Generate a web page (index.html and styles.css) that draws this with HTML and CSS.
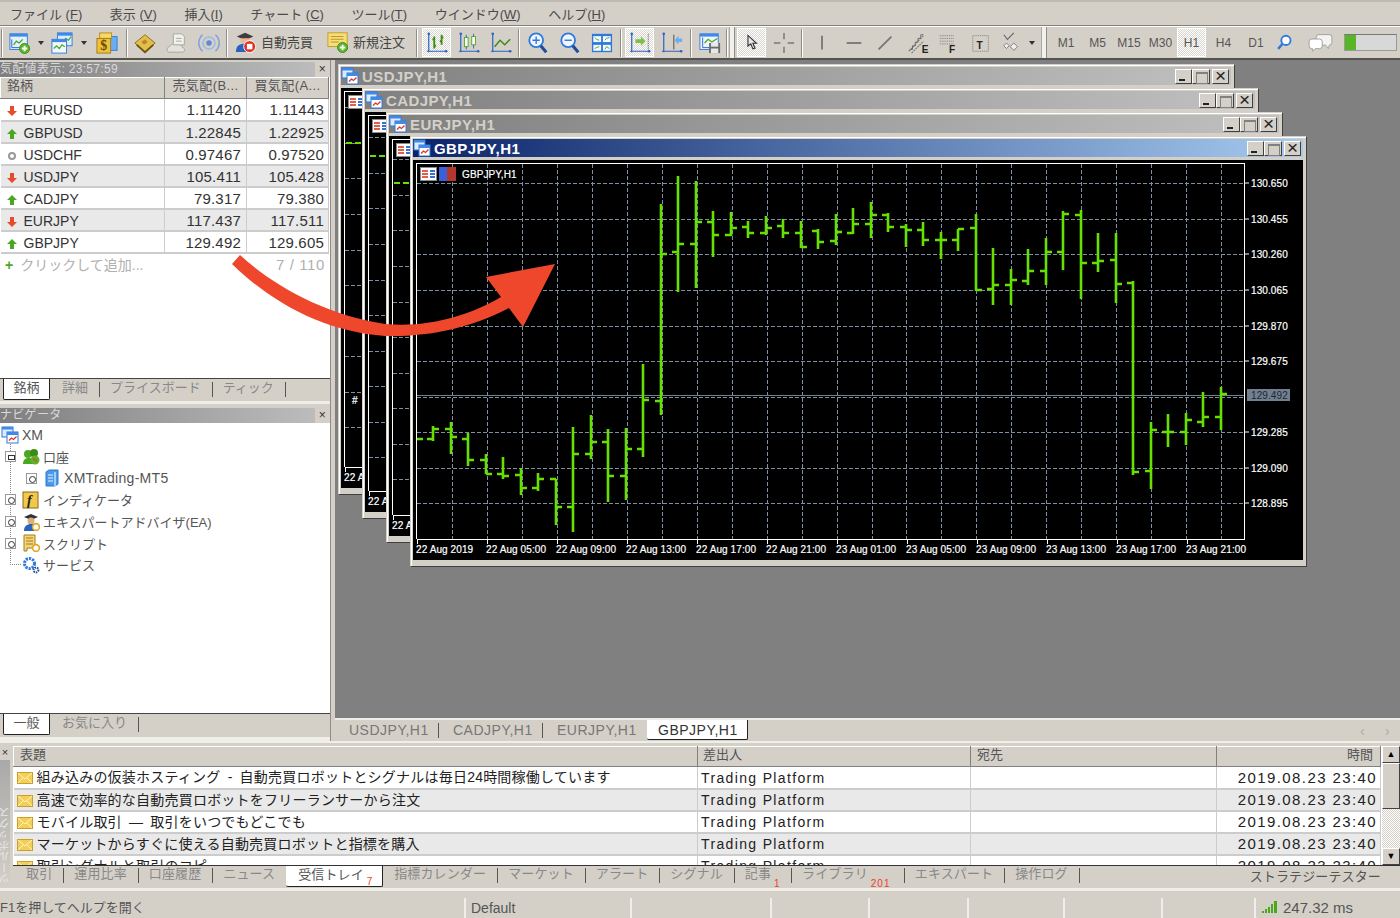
FILE: index.html
```html
<!DOCTYPE html>
<html lang="ja">
<head>
    <meta charset="UTF-8">
    <title>MetaTrader 5</title>
    <link rel="stylesheet" href="styles.css">
</head>
<body>

    <!-- Icon sprite -->
    <svg class="sprite" xmlns="http://www.w3.org/2000/svg">
        <symbol id="i-win" viewBox="0 0 18 18">
            <rect x="1" y="1" width="11" height="10" fill="#dcebff" stroke="#2f78dc"/>
            <rect x="1" y="1" width="11" height="2.5" fill="#3d8ae8"/>
            <rect x="6" y="6" width="11" height="11" fill="#fff" stroke="#2f78dc"/>
            <rect x="6" y="6" width="11" height="3" fill="#3d8ae8"/>
            <path d="M8 14.5l2.5-2.5 2 1.5 3-3" fill="none" stroke="#e0301e" stroke-width="1.2"/>
        </symbol>
        <symbol id="i-new" viewBox="0 0 24 24">
            <rect x="1" y="2" width="19" height="17" fill="#e4f0ff" stroke="#2f78dc"/>
            <rect x="1" y="2" width="19" height="3" fill="#3d8ae8"/>
            <path d="M3 8v9h15" fill="none" stroke="#2a62c0"/>
            <path d="M5 14l3-4 3 2 4-4" fill="none" stroke="#4aa81e" stroke-width="1.4"/>
            <circle cx="17" cy="18" r="5.5" fill="#5cb52a" stroke="#3d8a18"/>
            <path d="M14 18h6M17 15v6" stroke="#fff" stroke-width="2"/>
        </symbol>
        <symbol id="i-profiles" viewBox="0 0 24 24">
            <rect x="7" y="1" width="16" height="14" fill="#dcebff" stroke="#2f78dc"/>
            <rect x="7" y="1" width="16" height="3" fill="#3d8ae8"/>
            <path d="M13 10l3-3 3 2 3-4" fill="none" stroke="#4aa81e" stroke-width="1.3"/>
            <rect x="1" y="8" width="16" height="15" fill="#f0f7ff" stroke="#2f78dc"/>
            <rect x="1" y="8" width="16" height="3" fill="#3d8ae8"/>
            <path d="M3 18l3-3 3 3 3-4 3 2" fill="none" stroke="#4aa81e" stroke-width="1.3"/>
        </symbol>
        <symbol id="i-dollar" viewBox="0 0 24 24">
            <rect x="10" y="5" width="13" height="15" fill="#6aaef0" stroke="#2f78dc"/>
            <rect x="4" y="1" width="13" height="6" fill="#f4d96a" stroke="#b58a1a"/>
            <rect x="1" y="7" width="15" height="16" fill="#eec040" stroke="#a67c10"/>
            <text class="svg-dollar" x="8.5" y="20">$</text>
        </symbol>
        <symbol id="i-book" viewBox="0 0 24 24">
            <path d="M1 12L12 3l11 9-11 10z" fill="#e3bd4d" stroke="#8a6a10"/>
            <path d="M3 14l9 8 9-8" fill="none" stroke="#6b5410" stroke-width="2"/>
            <path d="M8 11l4-3 3 3-4 3z" fill="#b88a20"/>
        </symbol>
        <symbol id="i-cloud" viewBox="0 0 24 24">
            <path d="M3 22c-3-1-2-6 1-6 1-3 5-4 8-2 3-1 6 0 6 3 3 0 3 5 0 5z" fill="#e4e2dc" stroke="#a5a39c"/>
            <path d="M8 2h9l3 3v9H8z" fill="#f2f1ec" stroke="#a5a39c"/>
            <path d="M11 7h6M11 10h6" stroke="#a5a39c"/>
        </symbol>
        <symbol id="i-signal" viewBox="0 0 24 24">
            <circle cx="12" cy="12" r="3" fill="#5a8ad8"/>
            <circle cx="12" cy="12" r="6.5" fill="none" stroke="#9bb8e6" stroke-width="1.6"/>
            <path d="M5 3a12 12 0 0 0 0 18M19 3a12 12 0 0 1 0 18" fill="none" stroke="#7ea2de" stroke-width="1.6"/>
        </symbol>
        <symbol id="i-auto" viewBox="0 0 24 24">
            <path d="M2 6l9-4 9 4-9 4z" fill="#3e3e3e"/>
            <path d="M6 8v4c3 2 7 2 10 0V8z" fill="#e8b890"/>
            <path d="M1 23c0-7 4-9 9-9s7 3 7 9z" fill="#2a62c0"/>
            <circle cx="16" cy="17" r="6.5" fill="#e23020" stroke="#fff"/>
            <rect x="13" y="14" width="6" height="6" fill="#fff"/>
        </symbol>
        <symbol id="i-order" viewBox="0 0 24 24">
            <rect x="1" y="2" width="21" height="15" fill="#f6de78" stroke="#c09a1c"/>
            <path d="M4 6h14M4 9h14M4 12h9" stroke="#b89020"/>
            <circle cx="17" cy="18" r="5.5" fill="#5cb52a" stroke="#3d8a18"/>
            <path d="M14 18h6M17 15v6" stroke="#fff" stroke-width="2"/>
        </symbol>
        <symbol id="i-axes" viewBox="0 0 24 24">
            <path d="M3 1v21M1 21h22" fill="none" stroke="#2a62c0" stroke-width="1.3"/>
            <circle cx="3" cy="2" r="1.4" fill="#2a62c0"/>
            <circle cx="22" cy="21" r="1.4" fill="#2a62c0"/>
        </symbol>
        <symbol id="i-bars" viewBox="0 0 24 24">
            <use href="#i-axes"/>
            <path d="M9 5v13M7 8h2M9 15h2M17 3v11M15 10h2M17 6h2" fill="none" stroke="#3c8c14" stroke-width="2"/>
        </symbol>
        <symbol id="i-candles" viewBox="0 0 24 24">
            <use href="#i-axes"/>
            <rect x="7" y="6" width="4" height="10" fill="#fff" stroke="#4aa81e"/>
            <rect x="15" y="5" width="4" height="9" fill="#fff" stroke="#4aa81e"/>
            <path d="M9 3v3M9 16v3M17 2v3M17 14v4" stroke="#2a62c0"/>
        </symbol>
        <symbol id="i-line" viewBox="0 0 24 24">
            <use href="#i-axes"/>
            <path d="M5 16l6-7 5 5 6-6" fill="none" stroke="#3c8c14" stroke-width="1.6"/>
        </symbol>
        <symbol id="i-zoomin" viewBox="0 0 24 24">
            <circle cx="10" cy="9" r="7.5" fill="#f0f6ff" stroke="#2f78dc" stroke-width="2"/>
            <path d="M6 9h8M10 5v8" stroke="#2f78dc" stroke-width="1.5"/>
            <path d="M15 15l6 7" stroke="#1d4f98" stroke-width="3.4"/>
        </symbol>
        <symbol id="i-zoomout" viewBox="0 0 24 24">
            <circle cx="10" cy="9" r="7.5" fill="#f0f6ff" stroke="#2f78dc" stroke-width="2"/>
            <path d="M6 9h8" stroke="#2f78dc" stroke-width="1.5"/>
            <path d="M15 15l6 7" stroke="#1d4f98" stroke-width="3.4"/>
        </symbol>
        <symbol id="i-tile" viewBox="0 0 24 24">
            <rect x="1" y="2" width="22" height="20" fill="#2f78dc"/>
            <rect x="2.5" y="4.5" width="8.5" height="6.5" fill="#f4f8ff"/>
            <rect x="13" y="4.5" width="8.5" height="6.5" fill="#f4f8ff"/>
            <rect x="2.5" y="14" width="8.5" height="6.5" fill="#f4f8ff"/>
            <rect x="13" y="14" width="8.5" height="6.5" fill="#f4f8ff"/>
            <path d="M4 6l2 2 3 1M15 9l2-2 3-1M4 18l2-1 3-1M15 19l2-3 3 2" fill="none" stroke="#4aa81e"/>
        </symbol>
        <symbol id="i-shift" viewBox="0 0 24 24">
            <use href="#i-axes"/>
            <path d="M21 2v18" stroke="#444" stroke-dasharray="1 1"/>
            <path d="M7 8h6V5l5 5-5 5v-3H7z" fill="#7cc04a"/>
        </symbol>
        <symbol id="i-autoscroll" viewBox="0 0 24 24">
            <use href="#i-axes"/>
            <path d="M14 3v16" stroke="#444"/>
            <path d="M23 7h-4V4l-4 5 4 5v-3h4z" fill="#6aaef0"/>
        </symbol>
        <symbol id="i-template" viewBox="0 0 24 24">
            <rect x="1" y="2" width="20" height="17" fill="#eef5ff" stroke="#2f78dc"/>
            <rect x="1" y="2" width="20" height="3" fill="#3d8ae8"/>
            <path d="M4 6v11h8" fill="none" stroke="#2a62c0"/>
            <path d="M6 12l4-4 4 3 6-4" fill="none" stroke="#4aa81e" stroke-width="1.4"/>
            <rect x="11" y="12" width="12" height="11" fill="#6c6c6c"/>
            <rect x="13" y="12" width="8" height="4" fill="#e8e8e8"/>
            <rect x="13" y="18" width="8" height="5" fill="#e8e8e8"/>
        </symbol>
        <symbol id="i-pointer" viewBox="0 0 24 24">
            <path d="M7 2v15l4-3 3 7 3-1-3-7h5z" fill="#e8e8e8" stroke="#333" stroke-width="1.6"/>
        </symbol>
        <symbol id="i-cross" viewBox="0 0 24 24">
            <path d="M12 1v7M12 16v7M1 12h7M16 12h7" stroke="#777" stroke-width="1.6"/>
        </symbol>
        <symbol id="i-vline" viewBox="0 0 24 24"><path d="M12 4v15" stroke="#777" stroke-width="2"/></symbol>
        <symbol id="i-hline" viewBox="0 0 24 24"><path d="M4 12h16" stroke="#777" stroke-width="2"/></symbol>
        <symbol id="i-diag" viewBox="0 0 24 24"><path d="M5 19L19 5" stroke="#777" stroke-width="2"/></symbol>
        <symbol id="i-fibo" viewBox="0 0 24 24">
            <path d="M2 21l8-8M5 23l13-13M10 12l8-8" stroke="#777" stroke-width="1.2" stroke-dasharray="2 1"/>
            <path d="M3 19h3v-4h3v-4h3V7h3V3h3" fill="none" stroke="#666"/>
            <text class="svg-mark" x="16" y="23">E</text>
        </symbol>
        <symbol id="i-fan" viewBox="0 0 24 24">
            <path d="M2 4h15M2 7h15M2 10h15M2 13h15" stroke="#777" stroke-dasharray="1 1"/>
            <text class="svg-mark" x="12" y="23">F</text>
        </symbol>
        <symbol id="i-textbox" viewBox="0 0 24 24">
            <rect x="3" y="4" width="17" height="17" fill="none" stroke="#777" stroke-dasharray="1 1"/>
            <text class="svg-mark" x="7" y="18">T</text>
        </symbol>
        <symbol id="i-misc" viewBox="0 0 24 24">
            <path d="M3 3l4 5 7-7" fill="none" stroke="#666" stroke-width="1.2"/>
            <path d="M14 12l4 4-4 4-4-4zM6 12l3 3-3 3-3-3z" fill="#eee" stroke="#777"/>
        </symbol>
        <symbol id="i-search" viewBox="0 0 24 24">
            <circle cx="14" cy="9" r="6.5" fill="#fff" stroke="#2f78dc" stroke-width="2.6"/>
            <path d="M9 14l-6 7" stroke="#2f78dc" stroke-width="3.4"/>
        </symbol>
        <symbol id="i-chat" viewBox="0 0 28 24">
            <path d="M12 3h12q3 0 3 3v6q0 3-3 3l-1 4-3-4h-8q-3 0-3-3V6q0-3 3-3z" fill="#f4f4f0" stroke="#999"/>
            <path d="M4 8h9q3 0 3 3v5q0 3-3 3H8l-3 3v-3H4q-3 0-3-3v-5q0-3 3-3z" fill="#fff" stroke="#999"/>
        </symbol>
        <symbol id="i-down" viewBox="0 0 12 12"><path d="M4 1h4v5h3l-5 5-5-5h3z" fill="#e84a2c"/></symbol>
        <symbol id="i-up" viewBox="0 0 12 12"><path d="M6 1l5 5H8v5H4V6H1z" fill="#4aa81e"/></symbol>
        <symbol id="i-dot" viewBox="0 0 12 12"><circle cx="6" cy="6" r="3" fill="#fff" stroke="#999" stroke-width="2"/></symbol>
        <symbol id="i-accounts" viewBox="0 0 18 18">
            <circle cx="6" cy="6" r="4" fill="#4aa81e"/><circle cx="12" cy="5" r="4" fill="#3c8c14"/>
            <path d="M1 16c0-5 3-6 6-6s5 2 5 6z" fill="#4aa81e"/>
            <circle cx="13" cy="12" r="4.5" fill="#58b528"/>
            <path d="M11 11l4 2" stroke="#e84a2c" stroke-width="1.5"/>
        </symbol>
        <symbol id="i-server" viewBox="0 0 18 18">
            <path d="M3 3l3-2h9v14l-3 2H3z" fill="#4d9be8" stroke="#2a78c8"/>
            <path d="M12 3v14" stroke="#bfe0ff" stroke-width="1.5"/>
            <path d="M5 6h5M5 9h5M5 12h5" stroke="#e4f2ff"/>
        </symbol>
        <symbol id="i-func" viewBox="0 0 18 18">
            <rect x="1" y="1" width="15" height="16" fill="#f2c94c" stroke="#8a6a10"/>
            <text class="svg-func" x="5" y="14">f</text>
        </symbol>
        <symbol id="i-expert" viewBox="0 0 18 18">
            <path d="M2 4l7-3 7 3-7 3z" fill="#333"/>
            <circle cx="9" cy="8" r="3.5" fill="#d8b078"/>
            <path d="M2 18c0-5 3-7 7-7s6 2 6 7z" fill="#2a62c0"/>
            <circle cx="14" cy="14" r="3.4" fill="#fff" stroke="#e0a820" stroke-width="1.6"/>
        </symbol>
        <symbol id="i-script" viewBox="0 0 18 18">
            <path d="M2 1h11v13H5v3H2z" fill="#f2d57c" stroke="#a67c10"/>
            <path d="M4 4h7M4 7h7M4 10h7" stroke="#a67c10"/>
            <circle cx="14" cy="14" r="3.4" fill="#fff" stroke="#e0a820" stroke-width="1.6"/>
        </symbol>
        <symbol id="i-service" viewBox="0 0 18 18">
            <circle cx="7.5" cy="7.5" r="5" fill="#fff" stroke="#2f78dc" stroke-width="3" stroke-dasharray="2.2 1"/>
            <circle cx="14" cy="14" r="2.4" fill="#fff" stroke="#1d4f98" stroke-width="2" stroke-dasharray="1.4 .8"/>
        </symbol>
        <symbol id="i-mail" viewBox="0 0 16 12">
            <rect x=".5" y=".5" width="15" height="11" fill="#f4cf58" stroke="#c9a02a"/>
            <path d="M1 1l7 6 7-6M1 11l5-5M15 11l-5-5" fill="none" stroke="#fff4c4"/>
        </symbol>
        <symbol id="i-ping" viewBox="0 0 16 12">
            <path d="M0 10h2v2H0zM3 8h2v4H3zM6 6h2v6H6zM9 3h2v9H9zM12 0h3v12h-3z" fill="#4aa81e"/>
        </symbol>
    </svg>

    <!-- Menu -->
    <nav class="menubar">
        <span>ファイル (<u>F</u>)</span>
        <span>表示 (<u>V</u>)</span>
        <span>挿入(<u>I</u>)</span>
        <span>チャート (<u>C</u>)</span>
        <span>ツール(<u>T</u>)</span>
        <span>ウインドウ(<u>W</u>)</span>
        <span>ヘルプ(<u>H</u>)</span>
    </nav>

    <!-- Toolbar -->
    <div class="toolbar">
        <i class="sep"></i>
        <span class="tool"><svg class="ico"><use href="#i-new"/></svg></span>
        <span class="tool"><i class="caret"></i></span>
        <span class="tool"><svg class="ico"><use href="#i-profiles"/></svg></span>
        <span class="tool"><i class="caret"></i></span>
        <span class="tool"><svg class="ico"><use href="#i-dollar"/></svg></span>
        <i class="sep"></i>
        <span class="tool"><svg class="ico"><use href="#i-book"/></svg></span>
        <span class="tool"><svg class="ico"><use href="#i-cloud"/></svg></span>
        <span class="tool"><svg class="ico"><use href="#i-signal"/></svg></span>
        <i class="sep"></i>
        <span class="tool labeled"><svg class="ico"><use href="#i-auto"/></svg>自動売買</span>
        <span class="tool labeled"><svg class="ico"><use href="#i-order"/></svg>新規注文</span>
        <i class="sep"></i>
        <span class="tool"><b class="pressed"><svg class="ico"><use href="#i-bars"/></svg></b></span>
        <span class="tool"><svg class="ico"><use href="#i-candles"/></svg></span>
        <span class="tool"><svg class="ico"><use href="#i-line"/></svg></span>
        <i class="sep"></i>
        <span class="tool"><svg class="ico"><use href="#i-zoomin"/></svg></span>
        <span class="tool"><svg class="ico"><use href="#i-zoomout"/></svg></span>
        <span class="tool"><svg class="ico"><use href="#i-tile"/></svg></span>
        <i class="sep"></i>
        <span class="tool"><b class="pressed"><svg class="ico"><use href="#i-shift"/></svg></b></span>
        <span class="tool"><svg class="ico"><use href="#i-autoscroll"/></svg></span>
        <i class="sep"></i>
        <span class="tool"><svg class="ico"><use href="#i-template"/></svg></span>
        <i class="sep"></i>
        <i class="grip"></i>
        <span class="tool"><b class="pressed"><svg class="ico small"><use href="#i-pointer"/></svg></b></span>
        <span class="tool"><svg class="ico"><use href="#i-cross"/></svg></span>
        <i class="sep"></i>
        <span class="tool"><svg class="ico"><use href="#i-vline"/></svg></span>
        <span class="tool"><svg class="ico"><use href="#i-hline"/></svg></span>
        <span class="tool"><svg class="ico"><use href="#i-diag"/></svg></span>
        <span class="tool"><svg class="ico"><use href="#i-fibo"/></svg></span>
        <span class="tool"><svg class="ico"><use href="#i-fan"/></svg></span>
        <span class="tool"><svg class="ico"><use href="#i-textbox"/></svg></span>
        <span class="tool"><svg class="ico"><use href="#i-misc"/></svg></span>
        <span class="tool"><i class="caret dark"></i></span>
        <i class="grip"></i>
        <span class="tool period">M1</span>
        <span class="tool period">M5</span>
        <span class="tool period">M15</span>
        <span class="tool period">M30</span>
        <span class="tool period"><b class="pressed">H1</b></span>
        <span class="tool period">H4</span>
        <span class="tool period">D1</span>
        <span class="tool"><svg class="ico small"><use href="#i-search"/></svg></span>
        <span class="tool"><svg class="ico chat"><use href="#i-chat"/></svg></span>
        <span class="meter"><i></i></span>
    </div>

    <div class="main">
        <aside class="sidebar">
            <!-- Market watch -->
            <section class="panel market">
                <div class="panel-title"><span>気配値表示: 23:57:59</span><b>×</b></div>
                <div class="panel-body">
                    <table class="quotes">
                        <thead>
                            <tr><th>銘柄</th><th>売気配(B...</th><th>買気配(A...</th></tr>
                        </thead>
                        <tbody>
                            <tr><td><svg class="arrow"><use href="#i-down"/></svg>EURUSD</td><td>1.11420</td><td>1.11443</td></tr>
                            <tr><td><svg class="arrow"><use href="#i-up"/></svg>GBPUSD</td><td>1.22845</td><td>1.22925</td></tr>
                            <tr><td><svg class="arrow"><use href="#i-dot"/></svg>USDCHF</td><td>0.97467</td><td>0.97520</td></tr>
                            <tr><td><svg class="arrow"><use href="#i-down"/></svg>USDJPY</td><td>105.411</td><td>105.428</td></tr>
                            <tr><td><svg class="arrow"><use href="#i-up"/></svg>CADJPY</td><td>79.317</td><td>79.380</td></tr>
                            <tr><td><svg class="arrow"><use href="#i-down"/></svg>EURJPY</td><td>117.437</td><td>117.511</td></tr>
                            <tr><td><svg class="arrow"><use href="#i-up"/></svg>GBPJPY</td><td>129.492</td><td>129.605</td></tr>
                        </tbody>
                    </table>
                    <div class="add-row"><span><b>+</b>クリックして追加...</span><span>7 / 110</span></div>
                </div>
                <div class="tabs side-tabs">
                    <span class="tab active">銘柄</span>
                    <span class="tab">詳細</span>
                    <span class="tab">プライスボード</span>
                    <span class="tab">ティック</span>
                </div>
            </section>

            <!-- Navigator -->
            <section class="panel navigator">
                <div class="panel-title"><span>ナビゲータ</span><b>×</b></div>
                <div class="panel-body tree">
                    <div class="node root"><svg class="node-ico"><use href="#i-win"/></svg>XM</div>
                    <div class="node"><i class="box minus"></i><svg class="node-ico"><use href="#i-accounts"/></svg>口座</div>
                    <div class="node child"><i class="box"></i><svg class="node-ico"><use href="#i-server"/></svg>XMTrading-MT5</div>
                    <div class="node"><i class="box"></i><svg class="node-ico"><use href="#i-func"/></svg>インディケータ</div>
                    <div class="node"><i class="box"></i><svg class="node-ico"><use href="#i-expert"/></svg>エキスパートアドバイザ(EA)</div>
                    <div class="node"><i class="box"></i><svg class="node-ico"><use href="#i-script"/></svg>スクリプト</div>
                    <div class="node leaf"><svg class="node-ico"><use href="#i-service"/></svg>サービス</div>
                </div>
                <div class="tabs side-tabs">
                    <span class="tab active">一般</span>
                    <span class="tab">お気に入り</span>
                </div>
            </section>
        </aside>

        <div class="workspace">
            <!-- Chart windows -->
            <div class="mdi">
                <div class="window win-usd">
                    <div class="titlebar"><svg class="title-ico"><use href="#i-win"/></svg><span>USDJPY,H1</span><i class="wbtn min"></i><i class="wbtn max"></i><i class="wbtn close">×</i></div>
                    <svg class="chart" data-shift="-4" data-mark="79" data-hash="1"></svg>
                </div>
                <div class="window win-cad">
                    <div class="titlebar"><svg class="title-ico"><use href="#i-win"/></svg><span>CADJPY,H1</span><i class="wbtn min"></i><i class="wbtn max"></i><i class="wbtn close">×</i></div>
                    <svg class="chart" data-shift="2" data-mark="68"></svg>
                </div>
                <div class="window win-eur">
                    <div class="titlebar"><svg class="title-ico"><use href="#i-win"/></svg><span>EURJPY,H1</span><i class="wbtn min"></i><i class="wbtn max"></i><i class="wbtn close">×</i></div>
                    <svg class="chart" data-shift="0" data-mark="71"></svg>
                </div>
                <div class="window win-gbp active">
                    <div class="titlebar"><svg class="title-ico"><use href="#i-win"/></svg><span>GBPJPY,H1</span><i class="wbtn min"></i><i class="wbtn max"></i><i class="wbtn close">×</i></div>
                    <svg class="chart" id="mainChart" data-shift="0"></svg>
                </div>
            </div>
            <div class="tabs doc-tabs">
                <span class="tab">USDJPY,H1</span>
                <span class="tab">CADJPY,H1</span>
                <span class="tab">EURJPY,H1</span>
                <span class="tab active">GBPJPY,H1</span>
                <span class="doc-nav">‹</span>
                <span class="doc-nav">›</span>
            </div>
        </div>
    </div>

    <!-- Toolbox -->
    <div class="toolbox">
        <div class="toolbox-side"><b>×</b><span>ツールボックス</span></div>
        <div class="toolbox-main">
            <div class="mail-view">
                <div class="mail-scroll">
                    <table class="mail">
                        <thead>
                            <tr><th>表題</th><th>差出人</th><th>宛先</th><th class="right">時間</th></tr>
                        </thead>
                        <tbody>
                            <tr><td><svg class="mail-ico"><use href="#i-mail"/></svg>組み込みの仮装ホスティング - 自動売買ロボットとシグナルは毎日24時間稼働しています</td><td class="from">Trading Platform</td><td></td><td class="date">2019.08.23 23:40</td></tr>
                            <tr><td><svg class="mail-ico"><use href="#i-mail"/></svg>高速で効率的な自動売買ロボットをフリーランサーから注文</td><td class="from">Trading Platform</td><td></td><td class="date">2019.08.23 23:40</td></tr>
                            <tr><td><svg class="mail-ico"><use href="#i-mail"/></svg>モバイル取引 — 取引をいつでもどこでも</td><td class="from">Trading Platform</td><td></td><td class="date">2019.08.23 23:40</td></tr>
                            <tr><td><svg class="mail-ico"><use href="#i-mail"/></svg>マーケットからすぐに使える自動売買ロボットと指標を購入</td><td class="from">Trading Platform</td><td></td><td class="date">2019.08.23 23:40</td></tr>
                            <tr><td><svg class="mail-ico"><use href="#i-mail"/></svg>取引シグナルと取引のコピー</td><td class="from">Trading Platform</td><td></td><td class="date">2019.08.23 23:40</td></tr>
                        </tbody>
                    </table>
                </div>
                <div class="scrollbar">
                    <i class="sb-btn">▲</i>
                    <i class="sb-thumb"></i>
                    <i class="sb-track"></i>
                    <i class="sb-btn">▼</i>
                </div>
            </div>
            <div class="tabs box-tabs">
                <span class="tab">取引</span>
                <span class="tab">運用比率</span>
                <span class="tab">口座履歴</span>
                <span class="tab">ニュース</span>
                <span class="tab active">受信トレイ<sub>7</sub></span>
                <span class="tab">指標カレンダー</span>
                <span class="tab">マーケット</span>
                <span class="tab">アラート</span>
                <span class="tab">シグナル</span>
                <span class="tab counted">記事<sub>1</sub></span>
                <span class="tab counted wide">ライブラリ<sub>201</sub></span>
                <span class="tab">エキスパート</span>
                <span class="tab">操作ログ</span>
                <span class="tester">ストラテジーテスター</span>
            </div>
        </div>
    </div>

    <!-- Status bar -->
    <footer class="statusbar">
        <span class="help">F1を押してヘルプを開く</span>
        <span>Default</span>
        <span></span><span></span><span></span><span></span><span></span><span></span>
        <span class="ping"><svg class="ping-ico"><use href="#i-ping"/></svg>247.32 ms</span>
    </footer>

    <!-- Annotation arrow -->
    <svg class="annotation" viewBox="0 0 1400 918">
        <path d="M240 255C272 285 325 315 385 324C430 328 470 315 501 297L486 277L555 264L523 327L509 308C470 328 430 337 385 336C325 332 272 303 232 264Z" fill="#ee472c"/>
    </svg>

    <script src="chart.js"></script>
</body>
</html>
```

FILE: styles.css
```css
* {
    box-sizing: border-box;
}

html, body {
    height: 100%;
}

body {
    margin: 0;
    display: flex;
    flex-direction: column;
    overflow: hidden;
    position: relative;
    background-color: #d4d0c8;
    color: #333;
    font-family: "Liberation Sans", "Noto Sans CJK JP", sans-serif;
    font-size: 13px;
}

.sprite {
    display: none;
}

.svg-dollar {
    font: bold 15px "Liberation Serif", serif;
    fill: #6b4c00;
    text-anchor: middle;
}

.svg-mark {
    font: bold 11px "Liberation Sans", sans-serif;
    fill: #222;
}

.svg-func {
    font: italic bold 14px "Liberation Serif", serif;
    fill: #222;
}

/* Menu */
.menubar {
    height: 26px;
    flex: none;
    display: flex;
    align-items: center;
    gap: 27.6px;
    padding-left: 10px;
    border-top: 2px solid #bdbab3;
    border-bottom: 1px solid #808080;
    color: #4a4a4a;
}

/* Toolbar */
.toolbar {
    height: 34px;
    flex: none;
    display: grid;
    grid-template-columns:
        2px 34px 7px 36px 8px 38px 2px 33px 32px 32px 3px 92px 94px 6px 33px 31px 33px 4px
        34px 29px 35px 4px 33px 32px 5px 33px 2px 7px 33px 32px 4px 36px 28px 34px 31px 32px 32px 30px
        10px 13px 32px 31px 32px 31px 31px 33px 32px 24px 48px 53px;
    align-items: center;
    padding-left: 1px;
    border-top: 1px solid #fff;
    border-bottom: 2px solid #55534f;
}

.tool {
    display: flex;
    align-items: center;
    justify-content: center;
    height: 30px;
}

.tool.labeled {
    justify-content: flex-start;
    gap: 4px;
    padding-left: 7px;
    padding-bottom: 2px;
    font-size: 13px;
    color: #444;
}

.ico {
    width: 22px;
    height: 22px;
    flex: none;
}

.ico.small {
    width: 17px;
    height: 17px;
}

.ico.chat {
    width: 25px;
    height: 21px;
}

.sep {
    justify-self: center;
    width: 2px;
    height: 28px;
    background: linear-gradient(90deg, #8f8c85 50%, #fff 50%);
}

.grip {
    justify-self: center;
    width: 6px;
    height: 31px;
    background: #f2f0ea;
    border-left: 1px solid #aaa;
    border-right: 1px solid #8f8c85;
}

.caret {
    width: 0;
    height: 0;
    border: 3px solid transparent;
    border-top: 4px solid #333;
    border-bottom: 0;
}

.pressed {
    display: flex;
    align-items: center;
    justify-content: center;
    width: 29px;
    height: 29px;
    border: 1px solid #fff;
    font-weight: normal;
    background: repeating-conic-gradient(#fff 0 25%, #d9d6cf 0 50%) 0 0 / 2px 2px;
}

.period {
    font-size: 12px;
    color: #555;
}

.meter {
    height: 17px;
    width: 53px;
    background-color: #d8d8d8;
    border: 1px solid #9a9a9a;
    border-top-color: #777;
}

.meter i {
    display: block;
    width: 11px;
    height: 100%;
    background-color: #58b528;
}

/* Layout */
.main {
    flex: 1;
    display: flex;
    min-height: 0;
}

.sidebar {
    width: 335px;
    flex: none;
    display: flex;
    flex-direction: column;
    padding-right: 4px;
}

.panel {
    display: flex;
    flex-direction: column;
    border-right: 1px solid #8f8c85;
}

.market {
    height: 344px;
    padding-top: 2px;
}

.navigator {
    flex: 1;
    min-height: 0;
    padding-top: 4px;
}

.panel-title {
    height: 15px;
    flex: none;
    display: flex;
    align-items: center;
    justify-content: space-between;
    font-size: 12px;
    line-height: 12px;
    padding-bottom: 2px;
    color: #d9d9d9;
    background: linear-gradient(90deg, #7f7f7f 0, #bcbcbc 315px, #d4d0c8 315px);
    letter-spacing: .3px;
}

.panel-title b {
    width: 15px;
    text-align: center;
    color: #333;
    font-weight: normal;
}

.panel-body {
    flex: 1;
    min-height: 0;
    background-color: #fff;
}

/* Quotes */
table {
    border-collapse: collapse;
    table-layout: fixed;
}

th {
    padding: 0 5px;
    font-weight: normal;
    line-height: 14px;
    text-align: left;
    color: #555;
    background-color: #d4d0c8;
    border: 1px solid;
    border-color: #fff #808080 #808080 #fff;
}

.quotes {
    width: 329px;
}

.quotes th {
    height: 21px;
    padding: 0 6px 4px;
}

.quotes th:nth-child(1) {
    width: 164px;
}

.quotes th:nth-child(2) {
    width: 82px;
}

.quotes th + th {
    text-align: center;
    letter-spacing: .4px;
    padding: 0 0 4px;
}

.quotes td {
    height: 22px;
    padding: 2px 4px 0 0;
    font-size: 15px;
    line-height: 16px;
    text-align: right;
    letter-spacing: .2px;
    border-right: 1px solid #ccc;
    border-bottom: 2px solid #ccc;
}

.quotes td:nth-child(2) {
    padding-right: 5px;
}

.quotes td:first-child {
    font-size: 14px;
    letter-spacing: 0;
    text-align: left;
}

.quotes tr:nth-child(even) td {
    background-color: #e9e9e9;
}

.arrow {
    width: 12px;
    height: 12px;
    margin: 0 6px 0 5px;
    vertical-align: -2px;
}

.add-row {
    display: flex;
    justify-content: space-between;
    padding: 1px 5px 0 5px;
    line-height: 20px;
    color: #b0b0b0;
    font-size: 14px;
}

.add-row span:last-child {
    font-size: 15px;
    letter-spacing: .6px;
}

.add-row b {
    margin-right: 7px;
    color: #4aa81e;
}

/* Tabs */
.tabs {
    flex: none;
    display: flex;
    align-items: center;
    color: #888;
    background-color: #d4d0c8;
}

.tab {
    height: 15px;
    line-height: 12px;
    padding: 0 11px 0 10px;
    border-right: 1px solid #555;
    white-space: nowrap;
}

.tab.active {
    align-self: flex-start;
    height: 21px;
    line-height: 18px;
    color: #555;
    background-color: #fff;
    border-right: 1px solid #222;
    border-bottom: 1px solid #222;
    border-radius: 0 0 2px 2px;
}

.side-tabs {
    height: 26px;
    align-items: flex-start;
    padding-left: 3px;
    border-top: 1px solid #444;
    border-bottom: 3px solid #f0eee8;
}

.side-tabs .tab {
    margin-top: 3px;
}

.side-tabs .tab.active {
    width: 47px;
    margin-top: 0;
    padding: 0;
    text-align: center;
    border-left: 1px solid #222;
}

.side-tabs .tab.active + .tab {
    padding-left: 12px;
}

.navigator .side-tabs {
    height: 28px;
    border-bottom-width: 4px;
}

.tab:has(+ .tab.active) {
    border-right: 0;
}

/* Navigator tree */
.tree {
    position: relative;
    padding-top: 1px;
    font-size: 13px;
    color: #555;
}

.tree::before {
    content: "";
    position: absolute;
    left: 10px;
    top: 18px;
    height: 124px;
    border-left: 1px dotted #888;
}

.node {
    position: relative;
    height: 21.7px;
    display: flex;
    align-items: center;
    padding-left: 5px;
}

.node.root {
    padding-left: 1px;
    font-size: 14px;
}

.node.child {
    padding-left: 26px;
    font-size: 14px;
    letter-spacing: .3px;
}

.node.leaf {
    padding-left: 22px;
}

.node.leaf::before {
    content: "";
    position: absolute;
    left: 10px;
    width: 11px;
    border-top: 1px dotted #888;
}

.box {
    position: relative;
    width: 11px;
    height: 11px;
    margin-right: 6px;
    background-color: #fff;
    border: 1px solid #999;
    z-index: 1;
}

.box::after {
    content: "";
    position: absolute;
    left: 2px;
    top: 2px;
    width: 5px;
    height: 5px;
    border: 1px solid #333;
    border-radius: 50%;
}

.box.minus::after {
    top: 3px;
    height: 3px;
    border-radius: 0;
}

.node-ico {
    width: 18px;
    height: 18px;
    margin-right: 3px;
    flex: none;
}

/* MDI area */
.workspace {
    flex: 1;
    display: flex;
    flex-direction: column;
    min-width: 0;
}

.mdi {
    flex: 1;
    position: relative;
    overflow: hidden;
    background-color: #808080;
}

.window {
    position: absolute;
    width: 897px;
    height: 431px;
    display: flex;
    flex-direction: column;
    padding: 2px 3px 6px 2px;
    background-color: #d4d0c8;
    border: 1px solid;
    border-color: #d4d0c8 #404040 #404040 #d4d0c8;
    box-shadow: inset 1px 1px 0 #fff;
}

.win-usd { left: 3px; top: 4px; }
.win-cad { left: 27px; top: 28px; }
.win-eur { left: 51px; top: 52px; }
.win-gbp { left: 75px; top: 76px; }

.titlebar {
    height: 18px;
    flex: none;
    display: flex;
    align-items: center;
    padding-right: 2px;
    color: #d4d0c8;
    font-size: 15px;
    font-weight: bold;
    letter-spacing: .4px;
    background: linear-gradient(90deg, #808080, #c0c0c0);
}

.active .titlebar {
    color: #fff;
    background: linear-gradient(90deg, #0a246a, #a6caf0);
}

.title-ico {
    width: 18px;
    height: 18px;
    margin-right: 3px;
}

.titlebar span {
    flex: 1;
}

.wbtn {
    position: relative;
    width: 17px;
    height: 15px;
    display: block;
    background-color: #d4d0c8;
    border: 1px solid;
    border-color: #fff #404040 #404040 #fff;
    color: #222;
    font: normal 19px/12px "Liberation Sans", sans-serif;
    text-align: center;
    letter-spacing: 0;
}

.wbtn.max {
    width: 18px;
}

.wbtn.close {
    margin-left: 2px;
}

.wbtn.min::after {
    content: "";
    position: absolute;
    left: 3px;
    bottom: 2px;
    width: 6px;
    height: 2px;
    background-color: #222;
}

.wbtn.max::after {
    content: "";
    position: absolute;
    left: 3px;
    top: 2px;
    width: 10px;
    height: 9px;
    border: 1px solid #808080;
    border-top-width: 2px;
}

.chart {
    flex: 1;
    width: 100%;
    min-height: 0;
    display: block;
    background-color: #000;
    margin-top: 3px;
}

.chart text {
    font: 10px "Liberation Sans", sans-serif;
    fill: #fff;
    stroke: #fff;
    stroke-width: .2px;
    letter-spacing: .1px;
}

.chart .bid-text {
    fill: #1d2730;
    stroke: none;
}

.doc-tabs {
    height: 23px;
    font-size: 14px;
    letter-spacing: .5px;
    color: #777;
    border-top: 2px solid #f0eee8;
}

.doc-tabs .tab {
    width: 104px;
    line-height: 15px;
    padding: 0 0 0 14px;
}

.doc-tabs .tab.active {
    width: 101px;
    height: 20px;
    padding-left: 11px;
    line-height: 20px;
    color: #333;
    border-right: 1px solid #222;
}

.doc-nav {
    width: 11px;
    margin-left: 14px;
    color: #aaa;
    text-align: center;
}

.doc-tabs .tab.active + .doc-nav {
    margin-left: auto;
}

.doc-nav:last-child {
    margin-right: 7px;
}

/* Toolbox */
.toolbox {
    height: 147px;
    flex: none;
    display: flex;
    border-top: 2px solid #f0eee8;
    padding-top: 3px;
}

.toolbox-side {
    width: 13px;
    flex: none;
    display: flex;
    flex-direction: column;
    align-items: flex-start;
    font-size: 11px;
}

.toolbox-side b {
    width: 10px;
    height: 14px;
    font-weight: normal;
    text-align: center;
}

.toolbox-side span {
    width: 10px;
    flex: 1;
    writing-mode: vertical-rl;
    transform: rotate(180deg);
    text-align: left;
    line-height: 10px;
    padding-top: 4px;
    color: #e8e8e8;
    background: linear-gradient(0deg, #a9a9a9, #d4d0c8);
}

.toolbox-main {
    flex: 1;
    min-width: 0;
    display: flex;
    flex-direction: column;
}

.mail-view {
    flex: 1;
    min-height: 0;
    display: flex;
    background-color: #fff;
}

.mail-scroll {
    flex: 1;
    overflow: hidden;
}

.mail {
    width: 1368px;
}

.mail th {
    height: 20px;
    padding: 0 6px 4px;
}

.mail th:nth-child(1) { width: 684px; }
.mail th:nth-child(2) { width: 273px; padding-left: 5px; }
.mail th:nth-child(3) { width: 246px; }

.mail th.right,
.mail .date {
    text-align: right;
}

.mail th.right {
    padding-right: 7px;
}

.mail td {
    height: 22px;
    padding: 0 0 0 3px;
    font-size: 14px;
    line-height: 16px;
    letter-spacing: .22px;
    word-spacing: 3px;
    color: #222;
    white-space: nowrap;
    border-right: 1px solid #ccc;
    border-bottom: 2px solid #ccc;
}

.mail tr:nth-child(even) td {
    background-color: #e9e9e9;
}

.mail .from {
    letter-spacing: 1.35px;
    word-spacing: 0;
    padding: 1px 0 0 3px;
}

.mail .date {
    font-size: 15px;
    letter-spacing: 1.4px;
    word-spacing: 0;
    padding: 1px 3px 0 0;
}

.mail-ico {
    width: 16px;
    height: 12px;
    margin-right: 4px;
    vertical-align: -2px;
}

.scrollbar {
    width: 18px;
    flex: none;
    display: flex;
    flex-direction: column;
    background: repeating-conic-gradient(#fff 0 25%, #d4d0c8 0 50%) 0 0 / 2px 2px;
}

.scrollbar i {
    display: block;
}

.sb-btn,
.sb-thumb {
    background-color: #d4d0c8;
    border: 1px solid;
    border-color: #fff #404040 #404040 #fff;
}

.sb-btn {
    height: 17px;
    font: normal 9px/15px "Liberation Sans", sans-serif;
    text-align: center;
    color: #000;
}

.sb-thumb {
    height: 46px;
}

.sb-track {
    flex: 1;
}

.box-tabs {
    height: 23px;
    padding: 0 19px 4px 3px;
    letter-spacing: .13px;
    border-top: 1px solid #333;
}

.box-tabs .tab.active {
    width: 97px;
    padding-left: 12px;
    color: #555;
}

.box-tabs .tab.active + .tab {
    padding-left: 11px;
}

.box-tabs sub {
    position: absolute;
    margin: 11px 0 0 3px;
    font-size: 10px;
    line-height: 10px;
    color: #f0402a;
    letter-spacing: 1px;
}

.tab.counted {
    padding-right: 20px;
}

.tab.counted.wide {
    padding-right: 36px;
}

.tester {
    margin-left: auto;
    color: #555;
}

/* Status bar */
.statusbar {
    height: 30px;
    flex: none;
    display: grid;
    grid-template-columns: 466px 166px 140px 98px 99px 96px 98px 93px 1fr;
    align-items: end;
    padding-top: 5px;
    border-top: 3px solid #f0eee8;
    font-size: 14px;
    color: #555;
}

.statusbar span {
    height: 20px;
    padding-left: 5px;
    line-height: 20px;
    border-right: 2px solid #f0eee8;
    white-space: nowrap;
}

.statusbar .help {
    padding-left: 0;
    font-size: 13px;
}

.statusbar span:last-child {
    border-right: 0;
    font-size: 15px;
}

.ping-ico {
    width: 16px;
    height: 12px;
    margin: 0 5px 0 1px;
}

/* Arrow drawn over the screenshot */
.annotation {
    position: absolute;
    left: 0;
    top: 0;
    width: 1400px;
    height: 918px;
    pointer-events: none;
}
```

FILE: chart.js
```js
// high, low, open, close of each bar, in chart pixels
const BARS = [
    [426, 441, 439, 429], [422, 454, 429, 437], [433, 466, 439, 460], [454, 474, 460, 474],
    [457, 479, 474, 476], [468, 495, 475, 488], [473, 491, 488, 479], [479, 525, 479, 507],
    [427, 532, 507, 454], [415, 459, 454, 442], [429, 502, 442, 476], [428, 500, 476, 449],
    [364, 457, 449, 400], [204, 415, 401, 254], [176, 292, 252, 244], [181, 288, 244, 222],
    [211, 257, 222, 235], [212, 236, 235, 228], [221, 238, 227, 233], [216, 235, 233, 228],
    [219, 238, 226, 233], [221, 248, 233, 247], [229, 249, 231, 242], [214, 245, 241, 232],
    [208, 234, 233, 224], [202, 238, 224, 215], [213, 232, 215, 227], [224, 247, 227, 230],
    [222, 246, 230, 240], [232, 259, 240, 240], [229, 251, 240, 229], [214, 291, 228, 290],
    [248, 305, 289, 285], [269, 305, 285, 280], [249, 285, 281, 271], [238, 285, 271, 252],
    [211, 270, 252, 214], [210, 299, 215, 263], [233, 272, 263, 261], [233, 303, 260, 284],
    [281, 475, 283, 472], [422, 489, 471, 430], [414, 447, 432, 432], [413, 445, 432, 420],
    [392, 427, 422, 417], [387, 430, 417, 394]
];

const PRICES = ['130.650', '130.455', '130.260', '130.065', '129.870', '129.675', null, '129.285', '129.090', '128.895'];
const DATES = ['22 Aug 2019', '22 Aug 05:00', '22 Aug 09:00', '22 Aug 13:00', '22 Aug 17:00', '22 Aug 21:00',
    '23 Aug 01:00', '23 Aug 05:00', '23 Aug 09:00', '23 Aug 13:00', '23 Aug 17:00', '23 Aug 21:00'];
const LINE_Y = [183, 219, 254, 290, 326, 361, 397, 432, 468, 503];

const GRID = '#7f8fa3';
const GREEN = '#66e000';

function drawFrame(shift) {
    let out = '<g shape-rendering="crispEdges">';
    LINE_Y.forEach(y => {
        out += `<path d="M417 ${y + shift}H1244" stroke="${GRID}" stroke-dasharray="4 2"/>`;
    });
    for (let i = 0; i < 23; i++) {
        const x = Math.round(452 + i * 34.96);
        out += `<path d="M${x} 164V539" stroke="${GRID}" stroke-dasharray="4 2"/>`;
    }
    out += '<path d="M416.5 539V163.5H1244.5V539.5H416.5" fill="none" stroke="#fff"/>';
    DATES.forEach((label, i) => {
        const x = 416 + i * 70;
        out += `<path d="M${x + 1} 540v4" stroke="#fff"/>`;
    });
    out += '</g>';
    DATES.forEach((label, i) => {
        out += `<text x="${416 + i * 70}" y="553">${label}</text>`;
    });
    // small table icon in the corner
    out += '<rect x="420.5" y="167.5" width="16" height="13" fill="#fff" stroke="#8a8a8a"/>'
        + '<path d="M422 171h6M422 174h6M422 177h6" stroke="#e0604a" stroke-width="2"/>'
        + '<path d="M430 171h5M430 174h5M430 177h5" stroke="#3b6fd0" stroke-width="2"/>';
    return out;
}

function drawMain() {
    let out = '';
    LINE_Y.forEach((y, i) => {
        if (PRICES[i]) {
            out += `<path d="M1245 ${y}h4" stroke="#fff"/><text x="1251" y="${y + 4}">${PRICES[i]}</text>`;
        }
    });
    out += `<path d="M417 395.5H1244" stroke="#708090"/>`;
    out += `<rect x="1247" y="389" width="43" height="12" fill="#708090"/><text class="bid-text" x="1251" y="399">129.492</text>`;
    out += '<rect x="439" y="167" width="8" height="14" fill="#3a5fd8"/><rect x="447" y="167" width="9" height="14" fill="#b5362a"/>';
    out += '<text x="462" y="178">GBPJPY,H1</text>';

    let bars = 'M417 439h6';
    BARS.forEach((b, i) => {
        const x = Math.round(433 + i * 17.51);
        bars += `M${x} ${b[0]}V${b[1]}M${x - 6} ${b[2]}h6M${x} ${b[3]}h6`;
    });
    out += `<path d="${bars}" fill="none" stroke="${GREEN}" stroke-width="2.6"/>`;
    return out;
}

document.querySelectorAll('.chart').forEach(svg => {
    const shift = Number(svg.dataset.shift);
    let out = drawFrame(shift);
    if (svg.id === 'mainChart') {
        out += drawMain();
    } else {
        const y = Number(svg.dataset.mark) + 136;
        out += `<path d="M418 ${y}h18" stroke="${GREEN}" stroke-width="2" stroke-dasharray="6 3"/>`;
        if (svg.dataset.hash) {
            out += '<text x="424" y="476">#</text>';
        }
    }
    svg.setAttribute('viewBox', '413 160 890 400');
    svg.innerHTML = out;
});
```
